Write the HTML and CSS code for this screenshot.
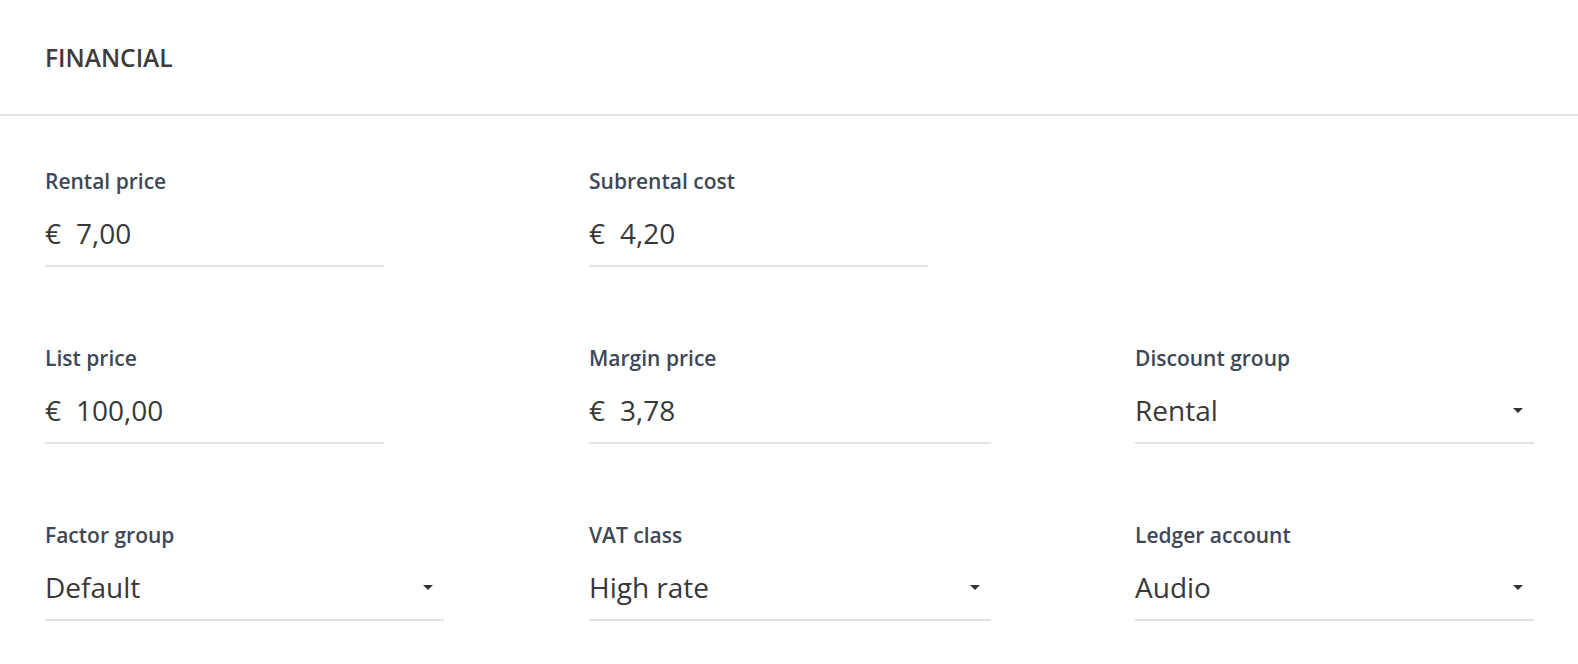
FILE: index.html
```html
<!DOCTYPE html>
<html>
<head>
<meta charset="utf-8">
<link rel="stylesheet" href="styles.css">
</head>
<body>
<div class="panel">
  <div class="header"><h2 class="title">FINANCIAL</h2></div>
  <div class="body">
    <div class="grid">
      <div class="field money"><div class="label">Rental price</div><div class="value"><span class="cur">€</span>7,00</div></div>
      <div class="field money"><div class="label">Subrental cost</div><div class="value"><span class="cur">€</span>4,20</div></div>
      <div class="empty"></div>

      <div class="field money"><div class="label">List price</div><div class="value"><span class="cur">€</span>100,00</div></div>
      <div class="field mid"><div class="label">Margin price</div><div class="value"><span class="cur">€</span>3,78</div></div>
      <div class="field wide select"><div class="label">Discount group</div><div class="value"><span class="text">Rental</span><span class="caret"></span></div></div>

      <div class="field wide select"><div class="label">Factor group</div><div class="value"><span class="text">Default</span><span class="caret"></span></div></div>
      <div class="field mid select"><div class="label">VAT class</div><div class="value"><span class="text">High rate</span><span class="caret"></span></div></div>
      <div class="field wide select"><div class="label">Ledger account</div><div class="value"><span class="text">Audio</span><span class="caret"></span></div></div>
    </div>
  </div>
</div>
</body>
</html>
```
FILE: styles.css
```css
html, body {
  margin: 0;
  padding: 0;
  background: #ffffff;
}
body {
  font-family: "Open Sans", Lato, sans-serif;
  color: #333;
}
.header {
  height: 114px;
  display: flex;
  align-items: center;
  padding-left: 45px;
  border-bottom: 2px solid #e3e3e3;
}
.title {
  margin: 0;
  font-size: 24.5px;
  font-weight: 600;
  color: #3c3c3c;
}
.body {
  padding: 52px 0 0 45px;
}
.grid {
  display: grid;
  grid-template-columns: 544px 546px 400px;
  row-gap: 78px;
}
.field {
  display: flex;
  flex-direction: column;
}
.field.money { width: 339px; }
.field.mid { width: 402px; }
.field.wide { width: 399px; }
.label {
  font-size: 21px;
  line-height: 26px;
  font-weight: 600;
  color: #3e4756;
}
.value {
  margin-top: 21px;
  height: 36px;
  line-height: 36px;
  font-size: 28px;
  color: #383838;
  padding-bottom: 14px;
  border-bottom: 2px solid #e3e3e3;
  display: flex;
  align-items: center;
}
.cur {
  margin-right: 15px;
}
.select .value {
  justify-content: space-between;
}
.caret {
  width: 0;
  height: 0;
  border-left: 5px solid transparent;
  border-right: 5px solid transparent;
  border-top: 5px solid #333;
  margin-right: 11px;
}
```
